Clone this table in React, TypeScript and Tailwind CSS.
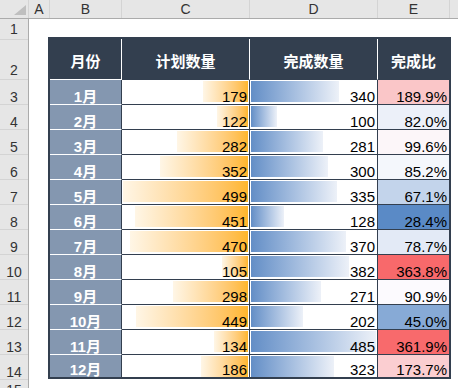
type Row = { m: string; plan: number; done: number; pct: string; cls: string };

const rows: Row[] = [
  { m: '1月', plan: 179, done: 340, pct: '189.9%', cls: 'bg-[#FAC6C8]' },
  { m: '2月', plan: 122, done: 100, pct: '82.0%', cls: 'bg-[#ECF0F9]' },
  { m: '3月', plan: 282, done: 281, pct: '99.6%', cls: 'bg-[#FCF6F9]' },
  { m: '4月', plan: 352, done: 300, pct: '85.2%', cls: 'bg-[#F4F7FC]' },
  { m: '5月', plan: 499, done: 335, pct: '67.1%', cls: 'bg-[#C3D4EB]' },
  { m: '6月', plan: 451, done: 128, pct: '28.4%', cls: 'bg-[#5A8AC6]' },
  { m: '7月', plan: 470, done: 370, pct: '78.7%', cls: 'bg-[#E3EAF6]' },
  { m: '8月', plan: 105, done: 382, pct: '363.8%', cls: 'bg-[#F8696B]' },
  { m: '9月', plan: 298, done: 271, pct: '90.9%', cls: 'bg-[#FCFAFE]' },
  { m: '10月', plan: 449, done: 202, pct: '45.0%', cls: 'bg-[#87AAD6]' },
  { m: '11月', plan: 134, done: 485, pct: '361.9%', cls: 'bg-[#F86A6C]' },
  { m: '12月', plan: 186, done: 323, pct: '173.7%', cls: 'bg-[#FBCED1]' },
];

const maxPlan = 499;
const maxDone = 485;

// row header heights (incl. 1px bottom line)
const rowHeads = [
  { n: 1, h: 'h-[21px]', pb: 'pb-[3px]' },
  { n: 2, h: 'h-[40px]', pb: 'pb-[2px]' },
  ...Array.from({ length: 12 }, (_, i) => ({ n: i + 3, h: 'h-[25px]', pb: 'pb-0' })),
  { n: 15, h: 'h-[18px]', pb: 'pb-0' },
];

const cols = [
  { l: 'A', w: 'w-[21px]' },
  { l: 'B', w: 'w-[72px]' },
  { l: 'C', w: 'w-[128px]' },
  { l: 'D', w: 'w-[128px]' },
  { l: 'E', w: 'w-[72px]' },
];

export default function App() {
  return (
    <div className="w-[458px] h-[388px] overflow-hidden bg-white font-['Liberation_Sans','Noto_Sans_CJK_SC',sans-serif]">
      {/* Column headers */}
      <div className="flex h-[19px] border-b border-[#ABABAB] bg-[#E6E6E6] text-[14px] text-[#333]">
        <div className="relative w-[29px] border-r border-[#D4D4D4]">
          <svg className="absolute left-0 top-0" width="28" height="18" viewBox="0 0 28 18">
            <polygon points="26,5 26,15 14,15" fill="#BFBFBF" />
          </svg>
        </div>
        {cols.map((c) => (
          <div
            key={c.l}
            className={`${c.w} flex items-center justify-center border-r border-[#D4D4D4] pt-[1px] leading-[17px]`}
          >
            {c.l}
          </div>
        ))}
        <div className="flex-1" />
      </div>

      <div className="flex">
        {/* Row headers */}
        <div className="w-[29px] shrink-0 border-r border-[#ABABAB] bg-[#E6E6E6] text-[14px] text-[#333]">
          {rowHeads.map((r) => (
            <div
              key={r.n}
              className={`${r.h} ${r.pb} flex items-end justify-center border-b border-[#D4D4D4] leading-[14px]`}
            >
              {r.n}
            </div>
          ))}
        </div>

        {/* Sheet */}
        <div className="flex-1 pl-[19px] pt-[18px]">
          <div className="w-[403px] border-2 border-[#333F4F]">
            {/* Header */}
            <div className="flex h-[41px] bg-[#333F4F] text-[15px] font-bold text-white">
              <div className="w-[72px] flex items-center justify-center border-r border-b border-r-white border-b-white pt-[4px] leading-[15px]">
                月份
              </div>
              <div className="w-[128px] flex items-center justify-center border-r border-b border-r-white border-b-[#333F4F] pt-[4px] leading-[15px]">
                计划数量
              </div>
              <div className="w-[128px] flex items-center justify-center border-r border-b border-r-white border-b-[#333F4F] pt-[4px] leading-[15px]">
                完成数量
              </div>
              <div className="w-[71px] flex items-center justify-center border-b border-b-[#333F4F] pt-[4px] leading-[15px]">
                完成比
              </div>
            </div>

            {/* Data rows */}
            {rows.map((r, i) => {
              const last = i === rows.length - 1;
              return (
                <div key={r.m} className={`flex text-[15px] text-black ${last ? 'h-[22px]' : 'h-[25px]'}`}>
                  <div
                    className={`w-[72px] flex items-end justify-center bg-[#8497B0] border-r border-r-[#333F4F] font-bold text-white leading-[15px] ${
                      last ? '' : 'border-b border-b-white'
                    }`}
                  >
                    {r.m}
                  </div>
                  <div
                    className={`w-[128px] grid border-r border-[#333F4F] ${last ? '' : 'border-b'}`}
                  >
                    <div
                      className="col-start-1 row-start-1 self-start justify-self-end mt-px mr-px h-[21px] bg-linear-to-l from-[#FFB628] to-[#FFF6E6]"
                      style={{ width: Math.round((r.plan / maxPlan) * 125) }}
                    />
                    <div className="col-start-1 row-start-1 self-end justify-self-end pr-[2px] leading-[15px]">
                      {r.plan}
                    </div>
                  </div>
                  <div
                    className={`w-[128px] grid border-r border-[#333F4F] ${last ? '' : 'border-b'}`}
                  >
                    <div
                      className="col-start-1 row-start-1 self-start justify-self-start mt-px ml-px h-[21px] bg-linear-to-r from-[#638EC6] to-[#EDF1F8]"
                      style={{ width: Math.round((r.done / maxDone) * 125) }}
                    />
                    <div className="col-start-1 row-start-1 self-end justify-self-end pr-[2px] leading-[15px]">
                      {r.done}
                    </div>
                  </div>
                  <div
                    className={`w-[71px] flex items-end justify-end pr-[2px] leading-[15px] ${r.cls} ${
                      last ? '' : 'border-b border-[#333F4F]'
                    }`}
                  >
                    {r.pct}
                  </div>
                </div>
              );
            })}
          </div>
        </div>
      </div>
    </div>
  );
}
